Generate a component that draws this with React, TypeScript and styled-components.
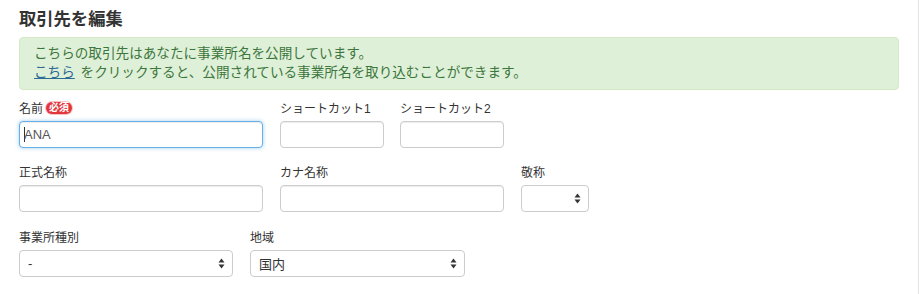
import React, { FC } from 'react';
import styled, { createGlobalStyle } from 'styled-components';

const GlobalStyle = createGlobalStyle`
  html, body {
    margin: 0;
    padding: 0;
    background: #fff;
  }
  body {
    font-family: "Liberation Sans", "Noto Sans CJK JP", sans-serif;
    color: #333;
  }
`;

const Page = styled.div`
  width: 880px;
  height: 294px;
  padding: 0 19px 0 19px;
  border-right: 1px solid #e3e3e3;
`;

const Title = styled.h2`
  margin: 0;
  padding-top: 8px;
  font-size: 17.3px;
  line-height: 22px;
  font-weight: bold;
  color: #333;
`;

const Alert = styled.div`
  margin-top: 7px;
  padding: 6px 14px 7px;
  background: #dff0d8;
  border: 1px solid #d6e9c6;
  border-radius: 4px;
  color: #3c763d;
  font-size: 13.6px;
  line-height: 19px;
  white-space: nowrap;
`;

const AlertLink = styled.a`
  color: #2d6a94;
  text-decoration: underline;
  cursor: pointer;
  margin-right: 2px;
`;

const Form = styled.div`
  margin-top: 9px;
  display: flex;
  flex-direction: column;
`;

const Row = styled.div<{ $top: number }>`
  display: flex;
  align-items: flex-start;
  margin-top: ${({ $top }) => $top}px;
`;

const Field = styled.div<{ $w: number; $gap: number }>`
  width: ${({ $w }) => $w}px;
  margin-right: ${({ $gap }) => $gap}px;
  display: flex;
  flex-direction: column;
`;

const Label = styled.label`
  display: flex;
  align-items: center;
  gap: 3px;
  height: 17px;
  margin-bottom: 5px;
  font-size: 12px;
  color: #333;
  white-space: nowrap;
`;

const Required = styled.span`
  display: inline-block;
  background: #e2363c;
  color: #fff;
  font-size: 10px;
  font-weight: bold;
  line-height: 12px;
  padding: 0 3px;
  border-radius: 6px;
  box-shadow: 0 0 0 1px #f6c3c5;
`;

const Input = styled.div<{ $focus?: boolean }>`
  box-sizing: border-box;
  height: 27px;
  padding: 0 4px;
  display: flex;
  align-items: center;
  background: #fff;
  border: 1px solid ${({ $focus }) => ($focus ? '#66afe9' : '#cccccc')};
  border-radius: 4px;
  box-shadow: ${({ $focus }) =>
    $focus
      ? 'inset 0 1px 1px rgba(0,0,0,.075), 0 0 4px rgba(102,175,233,.6)'
      : 'inset 0 1px 1px rgba(0,0,0,.075)'};
  font-size: 13px;
  color: #555;
`;

const Caret = styled.span`
  display: inline-block;
  width: 1px;
  height: 15px;
  background: #333;
  margin-right: -1px;
`;

const Select = styled.div`
  box-sizing: border-box;
  height: 27px;
  padding: 0 7px 0 8px;
  display: flex;
  align-items: center;
  justify-content: space-between;
  background: #fff;
  border: 1px solid #cccccc;
  border-radius: 4px;
  font-size: 13px;
  color: #333;
`;

const Arrows: FC = () => (
  <svg width="7" height="11" viewBox="0 0 7 11">
    <path d="M3.5 0.5 L6.5 4.5 L0.5 4.5 Z" fill="#333" />
    <path d="M3.5 10.5 L6.5 6.5 L0.5 6.5 Z" fill="#333" />
  </svg>
);

const App: FC = () => (
  <>
    <GlobalStyle />
    <Page>
      <Title>取引先を編集</Title>
      <Alert>
        こちらの取引先はあなたに事業所名を公開しています。
        <br />
        <AlertLink>こちら</AlertLink> をクリックすると、公開されている事業所名を取り込むことができます。
      </Alert>
      <Form>
        <Row $top={0}>
          <Field $w={244} $gap={17}>
            <Label>
              名前<Required>必須</Required>
            </Label>
            <Input $focus>
              <Caret />
              ANA
            </Input>
          </Field>
          <Field $w={104} $gap={16}>
            <Label>ショートカット1</Label>
            <Input />
          </Field>
          <Field $w={104} $gap={0}>
            <Label>ショートカット2</Label>
            <Input />
          </Field>
        </Row>
        <Row $top={15}>
          <Field $w={244} $gap={17}>
            <Label>正式名称</Label>
            <Input />
          </Field>
          <Field $w={224} $gap={17}>
            <Label>カナ名称</Label>
            <Input />
          </Field>
          <Field $w={68} $gap={0}>
            <Label>敬称</Label>
            <Select>
              <span />
              <Arrows />
            </Select>
          </Field>
        </Row>
        <Row $top={16}>
          <Field $w={214} $gap={17}>
            <Label>事業所種別</Label>
            <Select>
              <span>-</span>
              <Arrows />
            </Select>
          </Field>
          <Field $w={215} $gap={0}>
            <Label>地域</Label>
            <Select>
              <span>国内</span>
              <Arrows />
            </Select>
          </Field>
        </Row>
      </Form>
    </Page>
  </>
);

export default App;
